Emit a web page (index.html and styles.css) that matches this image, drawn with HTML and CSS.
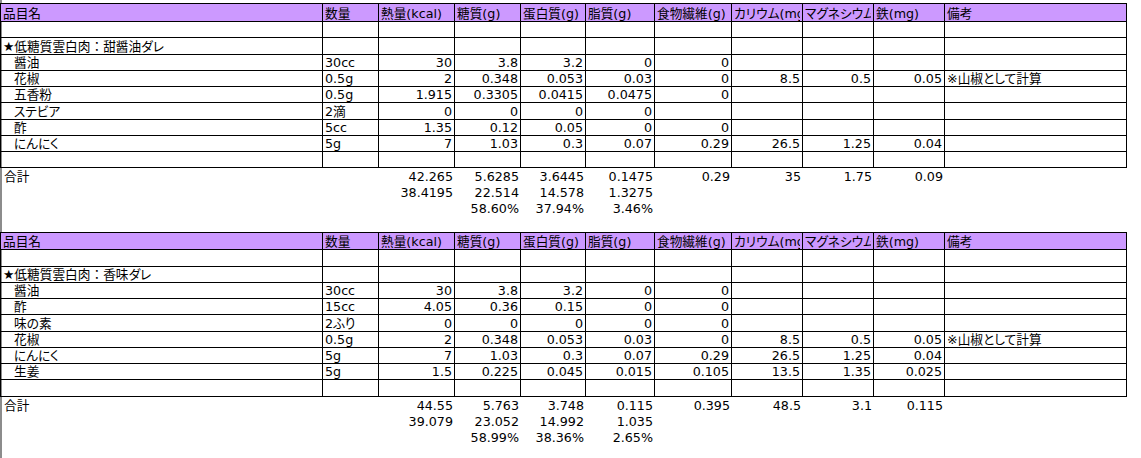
FILE: index.html
```html
<!DOCTYPE html>
<html lang="ja">
<head>
<meta charset="utf-8">
<title>低糖質雲白肉</title>
<link rel="stylesheet" href="styles.css">
</head>
<body>
<div class="sheet">

  <div class="tbl">
    <div class="row head">
      <div class="c">品目名</div><div class="c">数量</div><div class="c">熱量(kcal)</div><div class="c">糖質(g)</div><div class="c">蛋白質(g)</div><div class="c">脂質(g)</div><div class="c">食物繊維(g)</div><div class="c"><span class="clip">カリウム(mg)</span></div><div class="c"><span class="clip">マグネシウム(mg)</span></div><div class="c">鉄(mg)</div><div class="c">備考</div>
    </div>
    <div class="row">
      <div class="c"></div><div class="c"></div><div class="c"></div><div class="c"></div><div class="c"></div><div class="c"></div><div class="c"></div><div class="c"></div><div class="c"></div><div class="c"></div><div class="c"></div>
    </div>
    <div class="row">
      <div class="c">★低糖質雲白肉<span class="fw">：</span>甜醤油ダレ</div><div class="c"></div><div class="c"></div><div class="c"></div><div class="c"></div><div class="c"></div><div class="c"></div><div class="c"></div><div class="c"></div><div class="c"></div><div class="c"></div>
    </div>
    <div class="row">
      <div class="c ind">醤油</div><div class="c">30cc</div><div class="c n">30</div><div class="c n">3.8</div><div class="c n">3.2</div><div class="c n">0</div><div class="c n">0</div><div class="c n"></div><div class="c n"></div><div class="c n"></div><div class="c"></div>
    </div>
    <div class="row">
      <div class="c ind">花椒</div><div class="c">0.5g</div><div class="c n">2</div><div class="c n">0.348</div><div class="c n">0.053</div><div class="c n">0.03</div><div class="c n">0</div><div class="c n">8.5</div><div class="c n">0.5</div><div class="c n">0.05</div><div class="c">※山椒として計算</div>
    </div>
    <div class="row">
      <div class="c ind">五香粉</div><div class="c">0.5g</div><div class="c n">1.915</div><div class="c n">0.3305</div><div class="c n">0.0415</div><div class="c n">0.0475</div><div class="c n">0</div><div class="c n"></div><div class="c n"></div><div class="c n"></div><div class="c"></div>
    </div>
    <div class="row">
      <div class="c ind">ステビア</div><div class="c">2滴</div><div class="c n">0</div><div class="c n">0</div><div class="c n">0</div><div class="c n">0</div><div class="c n"></div><div class="c n"></div><div class="c n"></div><div class="c n"></div><div class="c"></div>
    </div>
    <div class="row">
      <div class="c ind">酢</div><div class="c">5cc</div><div class="c n">1.35</div><div class="c n">0.12</div><div class="c n">0.05</div><div class="c n">0</div><div class="c n">0</div><div class="c n"></div><div class="c n"></div><div class="c n"></div><div class="c"></div>
    </div>
    <div class="row">
      <div class="c ind">にんにく</div><div class="c">5g</div><div class="c n">7</div><div class="c n">1.03</div><div class="c n">0.3</div><div class="c n">0.07</div><div class="c n">0.29</div><div class="c n">26.5</div><div class="c n">1.25</div><div class="c n">0.04</div><div class="c"></div>
    </div>
    <div class="row">
      <div class="c"></div><div class="c"></div><div class="c"></div><div class="c"></div><div class="c"></div><div class="c"></div><div class="c"></div><div class="c"></div><div class="c"></div><div class="c"></div><div class="c"></div>
    </div>
  </div>

  <div class="totals">
    <div class="row">
      <div class="c">合計</div><div class="c"></div><div class="c n">42.265</div><div class="c n">5.6285</div><div class="c n">3.6445</div><div class="c n">0.1475</div><div class="c n">0.29</div><div class="c n">35</div><div class="c n">1.75</div><div class="c n">0.09</div><div class="c"></div>
    </div>
    <div class="row">
      <div class="c"></div><div class="c"></div><div class="c n">38.4195</div><div class="c n">22.514</div><div class="c n">14.578</div><div class="c n">1.3275</div><div class="c"></div><div class="c"></div><div class="c"></div><div class="c"></div><div class="c"></div>
    </div>
    <div class="row">
      <div class="c"></div><div class="c"></div><div class="c"></div><div class="c n">58.60%</div><div class="c n">37.94%</div><div class="c n">3.46%</div><div class="c"></div><div class="c"></div><div class="c"></div><div class="c"></div><div class="c"></div>
    </div>
    <div class="row">
      <div class="c"></div>
    </div>
  </div>

  <div class="tbl">
    <div class="row head head2">
      <div class="c">品目名</div><div class="c">数量</div><div class="c">熱量(kcal)</div><div class="c">糖質(g)</div><div class="c">蛋白質(g)</div><div class="c">脂質(g)</div><div class="c">食物繊維(g)</div><div class="c"><span class="clip">カリウム(mg)</span></div><div class="c"><span class="clip">マグネシウム(mg)</span></div><div class="c">鉄(mg)</div><div class="c">備考</div>
    </div>
    <div class="row">
      <div class="c"></div><div class="c"></div><div class="c"></div><div class="c"></div><div class="c"></div><div class="c"></div><div class="c"></div><div class="c"></div><div class="c"></div><div class="c"></div><div class="c"></div>
    </div>
    <div class="row">
      <div class="c">★低糖質雲白肉<span class="fw">：</span>香味ダレ</div><div class="c"></div><div class="c"></div><div class="c"></div><div class="c"></div><div class="c"></div><div class="c"></div><div class="c"></div><div class="c"></div><div class="c"></div><div class="c"></div>
    </div>
    <div class="row">
      <div class="c ind">醤油</div><div class="c">30cc</div><div class="c n">30</div><div class="c n">3.8</div><div class="c n">3.2</div><div class="c n">0</div><div class="c n">0</div><div class="c n"></div><div class="c n"></div><div class="c n"></div><div class="c"></div>
    </div>
    <div class="row">
      <div class="c ind">酢</div><div class="c">15cc</div><div class="c n">4.05</div><div class="c n">0.36</div><div class="c n">0.15</div><div class="c n">0</div><div class="c n">0</div><div class="c n"></div><div class="c n"></div><div class="c n"></div><div class="c"></div>
    </div>
    <div class="row">
      <div class="c ind">味の素</div><div class="c">2ふり</div><div class="c n">0</div><div class="c n">0</div><div class="c n">0</div><div class="c n">0</div><div class="c n">0</div><div class="c n"></div><div class="c n"></div><div class="c n"></div><div class="c"></div>
    </div>
    <div class="row">
      <div class="c ind">花椒</div><div class="c">0.5g</div><div class="c n">2</div><div class="c n">0.348</div><div class="c n">0.053</div><div class="c n">0.03</div><div class="c n">0</div><div class="c n">8.5</div><div class="c n">0.5</div><div class="c n">0.05</div><div class="c">※山椒として計算</div>
    </div>
    <div class="row">
      <div class="c ind">にんにく</div><div class="c">5g</div><div class="c n">7</div><div class="c n">1.03</div><div class="c n">0.3</div><div class="c n">0.07</div><div class="c n">0.29</div><div class="c n">26.5</div><div class="c n">1.25</div><div class="c n">0.04</div><div class="c"></div>
    </div>
    <div class="row">
      <div class="c ind">生姜</div><div class="c">5g</div><div class="c n">1.5</div><div class="c n">0.225</div><div class="c n">0.045</div><div class="c n">0.015</div><div class="c n">0.105</div><div class="c n">13.5</div><div class="c n">1.35</div><div class="c n">0.025</div><div class="c"></div>
    </div>
    <div class="row">
      <div class="c"></div><div class="c"></div><div class="c"></div><div class="c"></div><div class="c"></div><div class="c"></div><div class="c"></div><div class="c"></div><div class="c"></div><div class="c"></div><div class="c"></div>
    </div>
  </div>

  <div class="totals">
    <div class="row">
      <div class="c">合計</div><div class="c"></div><div class="c n">44.55</div><div class="c n">5.763</div><div class="c n">3.748</div><div class="c n">0.115</div><div class="c n">0.395</div><div class="c n">48.5</div><div class="c n">3.1</div><div class="c n">0.115</div><div class="c"></div>
    </div>
    <div class="row">
      <div class="c"></div><div class="c"></div><div class="c n">39.079</div><div class="c n">23.052</div><div class="c n">14.992</div><div class="c n">1.035</div><div class="c"></div><div class="c"></div><div class="c"></div><div class="c"></div><div class="c"></div>
    </div>
    <div class="row">
      <div class="c"></div><div class="c"></div><div class="c"></div><div class="c n">58.99%</div><div class="c n">38.36%</div><div class="c n">2.65%</div><div class="c"></div><div class="c"></div><div class="c"></div><div class="c"></div><div class="c"></div>
    </div>
  </div>

</div>
</body>
</html>
```

FILE: styles.css
```css
html, body {
  margin: 0;
  padding: 0;
  background: #ffffff;
}

body {
  font-family: "DejaVu Sans", "Noto Sans CJK JP", sans-serif;
  font-size: 12.7px;
  color: #000000;
  width: 1141px;
  height: 458px;
  overflow: hidden;
  font-feature-settings: "palt" 1;
}

.sheet {
  box-sizing: border-box;
  height: 458px;
  padding-top: 3px;
  border-left: 2px solid #8c8c8c;
}

.tbl {
  margin-left: -2px;
  width: 1127px;
  border-top: 1px solid #000000;
}

.row {
  display: grid;
  grid-template-columns: 323px 56px 76px 66px 65px 69px 77px 71px 71px 71px 182px;
  height: 16.25px;
  box-sizing: border-box;
}

.c {
  box-sizing: border-box;
  display: flex;
  align-items: flex-end;
  padding: 0 2px;
  line-height: 15px;
  white-space: nowrap;
  overflow: hidden;
  min-width: 0;
}

.clip {
  display: block;
  min-width: 0;
  max-width: 100%;
  overflow: hidden;
  white-space: nowrap;
}

.fw {
  font-feature-settings: normal;
}

.tbl .c {
  border-right: 1px solid #000000;
  border-bottom: 1px solid #000000;
}

.tbl .c:first-child {
  border-left: 1px solid #000000;
  padding-left: 2px;
}

.head {
  height: 18px;
  background: #cc99ff;
}

.head2 {
  height: 17px;
}

.n {
  justify-content: flex-end;
}

.ind {
  padding-left: 13px;
}

.tbl .c.ind:first-child {
  padding-left: 13px;
}

.totals {
  margin-left: -2px;
}

.totals .row {
  height: 16px;
}

.totals .c:first-child {
  padding-left: 4px;
}
```
